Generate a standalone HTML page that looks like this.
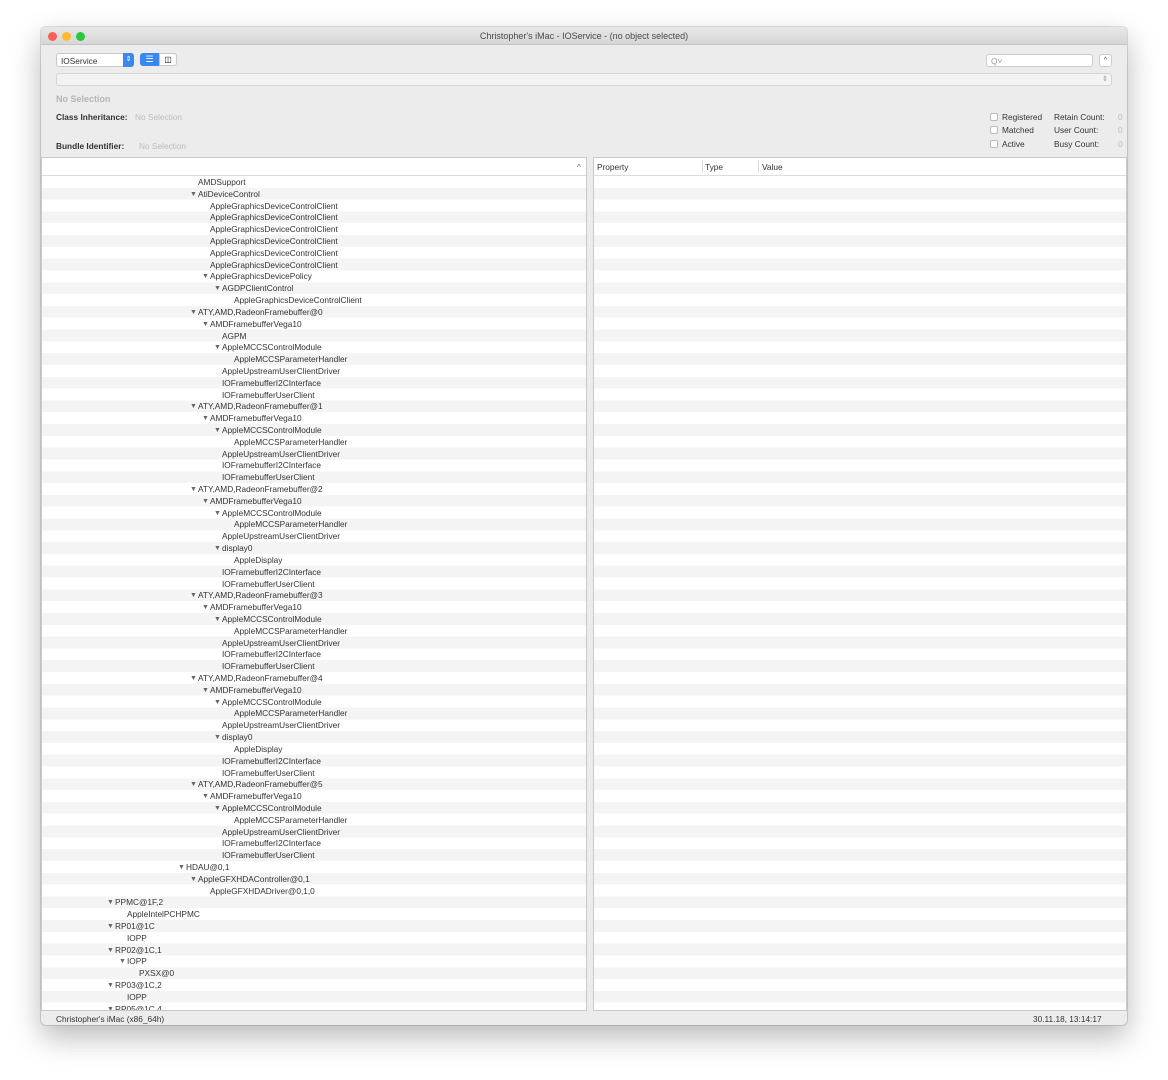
<!DOCTYPE html>
<html><head><meta charset="utf-8"><style>
*{margin:0;padding:0;box-sizing:border-box}
html,body{width:1168px;height:1080px;overflow:hidden}
body{background:#fff;font-family:"Liberation Sans",sans-serif;position:relative}
.win{position:absolute;left:41px;top:27px;width:1086px;height:998px;background:#ececec;border-radius:5px;box-shadow:0 12px 30px rgba(0,0,0,.28),0 0 0 1px rgba(0,0,0,.12);overflow:hidden}
.title{position:absolute;left:0;top:0;width:100%;height:18px;background:linear-gradient(#e8e8e8,#d6d6d6);border-bottom:1px solid #c4c4c4;text-align:center;font-size:9px;line-height:19px;color:#4a4a4a}
.dot{position:absolute;top:5px;width:9px;height:9px;border-radius:50%}
.a{position:absolute;font-size:8.3px;color:#333;white-space:nowrap}
.g{color:#bdbdbd}
.b{font-weight:bold;color:#333}
.panel{position:absolute;background:#fff;border:1px solid #c8c8c8;overflow:hidden}
.rows{position:absolute;left:0;top:18px;width:100%;height:834px;background:repeating-linear-gradient(#fff 0,#fff 11.81px,#f4f4f4 11.81px,#f4f4f4 23.62px)}
.r{position:absolute;height:11.81px;line-height:13px;font-size:8.3px;color:#333;white-space:nowrap}
.t::before{content:"▼";font-size:7px;color:#666;position:absolute;left:-8px;top:0}
.cb{position:absolute;width:8px;height:8px;border:1px solid #bbb;background:#fff;border-radius:2px}
</style></head><body>
<div class="win">
<div class="title">Christopher's iMac - IOService - (no object selected)</div>
<div class="dot" style="left:7px;background:#fc5f57"></div>
<div class="dot" style="left:21px;background:#fdbc2e"></div>
<div class="dot" style="left:35px;background:#28c840"></div>

<div style="position:absolute;left:15px;top:26px;width:78px;height:14px;background:#fff;border:1px solid #c8c8c8;border-radius:3px"></div>
<div class="a" style="left:20px;top:29px">IOService</div>
<div style="position:absolute;left:82px;top:26px;width:11px;height:14px;background:#3b87f0;border-radius:0 3px 3px 0;color:#fff;font-size:7px;text-align:center;line-height:14px">⇕</div>
<div style="position:absolute;left:99px;top:26px;width:19px;height:13px;background:#3b87f0;border-radius:3px 0 0 3px;color:#fff;font-size:9px;text-align:center;line-height:13px">☰</div>
<div style="position:absolute;left:118px;top:26px;width:18px;height:13px;background:#fff;border:1px solid #c8c8c8;border-radius:0 3px 3px 0;font-size:8px;text-align:center;line-height:11px">◫</div>

<div style="position:absolute;left:15px;top:46px;width:1056px;height:13px;background:#f3f3f3;border:1px solid #d4d4d4;border-radius:3px"></div>
<div class="a" style="left:1061px;top:48px;color:#999;font-size:7px">⇕</div>

<div style="position:absolute;left:945px;top:27px;width:107px;height:13px;background:#fff;border:1px solid #ccc;border-radius:3px"></div>
<div class="a" style="left:950px;top:29px;color:#999">Q˅</div>
<div style="position:absolute;left:1058px;top:27px;width:13px;height:13px;background:#fff;border:1px solid #ccc;border-radius:3px;font-size:7px;text-align:center;line-height:12px;color:#444">^</div>

<div class="a b" style="left:15px;top:67px;color:#b5b5b5;font-size:9px">No Selection</div>
<div class="a b" style="left:15px;top:85px">Class Inheritance:</div>
<div class="a g" style="left:94px;top:85px">No Selection</div>
<div class="a b" style="left:15px;top:114px">Bundle Identifier:</div>
<div class="a g" style="left:98px;top:114px">No Selection</div>

<div class="cb" style="left:949px;top:86px"></div><div class="a" style="left:961px;top:85px">Registered</div>
<div class="cb" style="left:949px;top:99px"></div><div class="a" style="left:961px;top:98px">Matched</div>
<div class="cb" style="left:949px;top:113px"></div><div class="a" style="left:961px;top:112px">Active</div>
<div class="a" style="left:1013px;top:85px">Retain Count:</div><div class="a g" style="left:1077px;top:85px">0</div>
<div class="a" style="left:1013px;top:98px">User Count:</div><div class="a g" style="left:1077px;top:98px">0</div>
<div class="a" style="left:1013px;top:112px">Busy Count:</div><div class="a g" style="left:1077px;top:112px">0</div>

<div class="panel" style="left:0;top:130px;width:546px;height:854px">
<div style="position:absolute;left:0;top:0;width:100%;height:18px;border-bottom:1px solid #ddd;background:#fff"></div>
<div class="a" style="left:535px;top:4px;color:#666">^</div>
<div class="rows">
<div class="r" style="left:156px;top:0">AMDSupport</div>
<div class="r t" style="left:156px;top:11.81px">AtiDeviceControl</div>
<div class="r" style="left:168px;top:23.62px">AppleGraphicsDeviceControlClient</div>
<div class="r" style="left:168px;top:35.43px">AppleGraphicsDeviceControlClient</div>
<div class="r" style="left:168px;top:47.24px">AppleGraphicsDeviceControlClient</div>
<div class="r" style="left:168px;top:59.05px">AppleGraphicsDeviceControlClient</div>
<div class="r" style="left:168px;top:70.86px">AppleGraphicsDeviceControlClient</div>
<div class="r" style="left:168px;top:82.67px">AppleGraphicsDeviceControlClient</div>
<div class="r t" style="left:168px;top:94.48px">AppleGraphicsDevicePolicy</div>
<div class="r t" style="left:180px;top:106.29px">AGDPClientControl</div>
<div class="r" style="left:192px;top:118.1px">AppleGraphicsDeviceControlClient</div>
<div class="r t" style="left:156px;top:129.91px">ATY,AMD,RadeonFramebuffer@0</div>
<div class="r t" style="left:168px;top:141.72px">AMDFramebufferVega10</div>
<div class="r" style="left:180px;top:153.53px">AGPM</div>
<div class="r t" style="left:180px;top:165.34px">AppleMCCSControlModule</div>
<div class="r" style="left:192px;top:177.15px">AppleMCCSParameterHandler</div>
<div class="r" style="left:180px;top:188.96px">AppleUpstreamUserClientDriver</div>
<div class="r" style="left:180px;top:200.77px">IOFramebufferI2CInterface</div>
<div class="r" style="left:180px;top:212.58px">IOFramebufferUserClient</div>
<div class="r t" style="left:156px;top:224.39px">ATY,AMD,RadeonFramebuffer@1</div>
<div class="r t" style="left:168px;top:236.2px">AMDFramebufferVega10</div>
<div class="r t" style="left:180px;top:248.01px">AppleMCCSControlModule</div>
<div class="r" style="left:192px;top:259.82px">AppleMCCSParameterHandler</div>
<div class="r" style="left:180px;top:271.63px">AppleUpstreamUserClientDriver</div>
<div class="r" style="left:180px;top:283.44px">IOFramebufferI2CInterface</div>
<div class="r" style="left:180px;top:295.25px">IOFramebufferUserClient</div>
<div class="r t" style="left:156px;top:307.06px">ATY,AMD,RadeonFramebuffer@2</div>
<div class="r t" style="left:168px;top:318.87px">AMDFramebufferVega10</div>
<div class="r t" style="left:180px;top:330.68px">AppleMCCSControlModule</div>
<div class="r" style="left:192px;top:342.49px">AppleMCCSParameterHandler</div>
<div class="r" style="left:180px;top:354.3px">AppleUpstreamUserClientDriver</div>
<div class="r t" style="left:180px;top:366.11px">display0</div>
<div class="r" style="left:192px;top:377.92px">AppleDisplay</div>
<div class="r" style="left:180px;top:389.73px">IOFramebufferI2CInterface</div>
<div class="r" style="left:180px;top:401.54px">IOFramebufferUserClient</div>
<div class="r t" style="left:156px;top:413.35px">ATY,AMD,RadeonFramebuffer@3</div>
<div class="r t" style="left:168px;top:425.16px">AMDFramebufferVega10</div>
<div class="r t" style="left:180px;top:436.97px">AppleMCCSControlModule</div>
<div class="r" style="left:192px;top:448.78px">AppleMCCSParameterHandler</div>
<div class="r" style="left:180px;top:460.59px">AppleUpstreamUserClientDriver</div>
<div class="r" style="left:180px;top:472.4px">IOFramebufferI2CInterface</div>
<div class="r" style="left:180px;top:484.21px">IOFramebufferUserClient</div>
<div class="r t" style="left:156px;top:496.02px">ATY,AMD,RadeonFramebuffer@4</div>
<div class="r t" style="left:168px;top:507.83px">AMDFramebufferVega10</div>
<div class="r t" style="left:180px;top:519.64px">AppleMCCSControlModule</div>
<div class="r" style="left:192px;top:531.45px">AppleMCCSParameterHandler</div>
<div class="r" style="left:180px;top:543.26px">AppleUpstreamUserClientDriver</div>
<div class="r t" style="left:180px;top:555.07px">display0</div>
<div class="r" style="left:192px;top:566.88px">AppleDisplay</div>
<div class="r" style="left:180px;top:578.69px">IOFramebufferI2CInterface</div>
<div class="r" style="left:180px;top:590.5px">IOFramebufferUserClient</div>
<div class="r t" style="left:156px;top:602.31px">ATY,AMD,RadeonFramebuffer@5</div>
<div class="r t" style="left:168px;top:614.12px">AMDFramebufferVega10</div>
<div class="r t" style="left:180px;top:625.93px">AppleMCCSControlModule</div>
<div class="r" style="left:192px;top:637.74px">AppleMCCSParameterHandler</div>
<div class="r" style="left:180px;top:649.55px">AppleUpstreamUserClientDriver</div>
<div class="r" style="left:180px;top:661.36px">IOFramebufferI2CInterface</div>
<div class="r" style="left:180px;top:673.17px">IOFramebufferUserClient</div>
<div class="r t" style="left:144px;top:684.98px">HDAU@0,1</div>
<div class="r t" style="left:156px;top:696.79px">AppleGFXHDAController@0,1</div>
<div class="r" style="left:168px;top:708.6px">AppleGFXHDADriver@0,1,0</div>
<div class="r t" style="left:73px;top:720.41px">PPMC@1F,2</div>
<div class="r" style="left:85px;top:732.22px">AppleIntelPCHPMC</div>
<div class="r t" style="left:73px;top:744.03px">RP01@1C</div>
<div class="r" style="left:85px;top:755.84px">IOPP</div>
<div class="r t" style="left:73px;top:767.65px">RP02@1C,1</div>
<div class="r t" style="left:85px;top:779.46px">IOPP</div>
<div class="r" style="left:97px;top:791.27px">PXSX@0</div>
<div class="r t" style="left:73px;top:803.08px">RP03@1C,2</div>
<div class="r" style="left:85px;top:814.89px">IOPP</div>
<div class="r t" style="left:73px;top:826.7px">RP05@1C,4</div>
</div>
</div>

<div class="panel" style="left:552px;top:130px;width:534px;height:854px">
<div class="rows"></div>
<div style="position:absolute;left:0;top:0;width:100%;height:18px;border-bottom:1px solid #ddd;background:#fff"></div>
<div class="a" style="left:3px;top:4px">Property</div>
<div style="position:absolute;left:108px;top:2px;width:1px;height:13px;background:#ddd"></div>
<div class="a" style="left:111px;top:4px">Type</div>
<div style="position:absolute;left:164px;top:2px;width:1px;height:13px;background:#ddd"></div>
<div class="a" style="left:168px;top:4px">Value</div>
</div>

<div class="a" style="left:15px;top:987px">Christopher's iMac (x86_64h)</div>
<div class="a" style="left:992px;top:987px">30.11.18, 13:14:17</div>
</div>
</body></html>
